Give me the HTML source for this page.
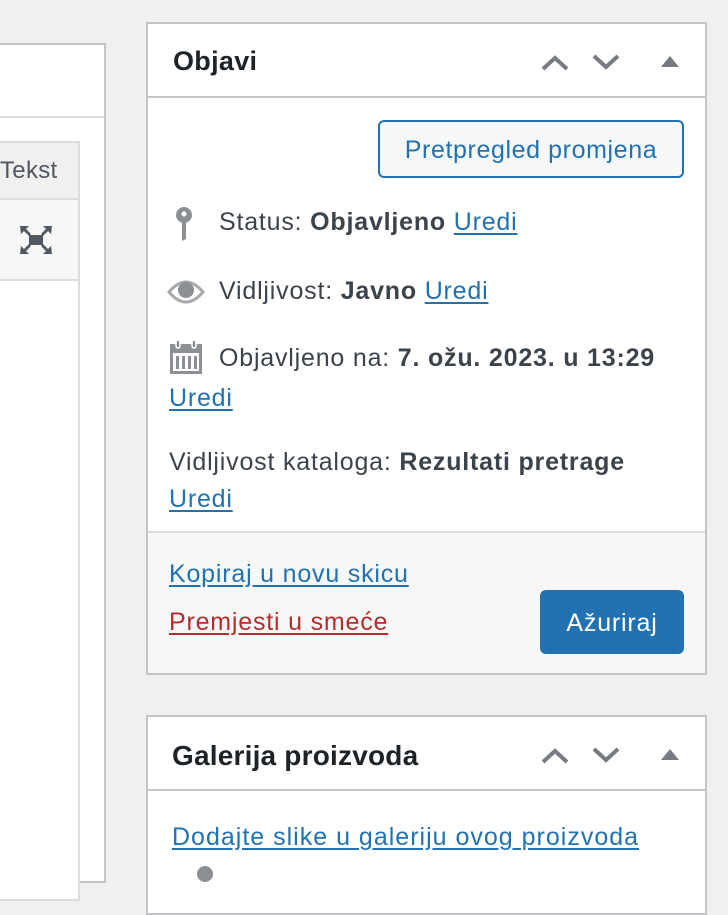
<!DOCTYPE html>
<html><head><meta charset="utf-8"><style>
*{box-sizing:border-box;margin:0;padding:0}
body{width:728px;height:870px;overflow:hidden;background:#f0f0f1;font-family:"Liberation Sans",Arial,sans-serif;color:#3c434a;position:relative;font-size:25px;letter-spacing:0.8px;line-height:1.15}
.abs{position:absolute}
a{color:#2271b1;text-decoration:underline;text-underline-offset:3px}
b{color:#3c434a}
</style></head><body>
<div class="abs" style="left:-4px;top:43px;width:110px;height:840px;background:#fff;border:2px solid #c3c4c7"></div>
<div class="abs" style="left:0;top:116px;width:104px;height:2px;background:#dcdcde"></div>
<div class="abs" style="left:-4px;top:141px;width:84px;height:760px;background:#fff;border:2px solid #dcdcde"></div>
<div class="abs" style="left:-2px;top:143px;width:80px;height:55px;background:#f0f0f1"></div>
<div class="abs" style="top:157px;left:0px;color:#50575e;letter-spacing:0.3px;font-size:24px">Tekst</div>
<div class="abs" style="left:-2px;top:198px;width:80px;height:83px;background:#f6f7f7;border-top:2px solid #dcdcde;border-bottom:2px solid #dcdcde"></div>
<svg class="abs" style="left:19px;top:225px" width="34" height="30" viewBox="0 0 34 30" fill="#50575e">
<rect x="10" y="10" width="14" height="10"/>
<path d="M1 1h9l-3 3 5 5-2 2-5-5-3 3z"/><path d="M33 1h-9l3 3-5 5 2 2 5-5 3 3z"/>
<path d="M1 29h9l-3-3 5-5-2-2-5 5-3-3z"/><path d="M33 29h-9l3-3-5-5 2-2 5 5 3-3z"/>
</svg>

<div class="abs" style="left:146px;top:22px;width:561px;height:653px;background:#fff;border:2px solid #c3c4c7"></div>
<div class="abs" style="left:148px;top:96px;width:557px;height:2px;background:#c3c4c7"></div>
<div class="abs" style="left:173px;top:46px;font-size:27px;font-weight:bold;color:#1d2327;letter-spacing:0.3px">Objavi</div>
<svg class="abs" style="left:540px;top:54px" width="30" height="18"><path d="M3 15l12-11 12 11" fill="none" stroke="#787c82" stroke-width="4"/></svg>
<svg class="abs" style="left:591px;top:53px" width="30" height="18"><path d="M3 3l12 11 12-11" fill="none" stroke="#787c82" stroke-width="4"/></svg>
<svg class="abs" style="left:660px;top:54px" width="20" height="14"><path d="M1 13L10 2l9 11z" fill="#787c82"/></svg>

<div class="abs" style="left:378px;top:120px;width:306px;height:58px;border:2px solid #2271b1;border-radius:6px;background:#f6f7f7;color:#2271b1;text-align:center;line-height:56px;letter-spacing:0.6px">Pretpregled promjena</div>

<svg class="abs" style="left:175px;top:207px" width="18" height="34" fill="#8c8f94"><circle cx="9" cy="8" r="8"/><circle cx="9" cy="7" r="2.5" fill="#fff"/><path d="M7 12h4v20l-4 2z"/></svg>
<div class="abs" style="left:219px;top:208px">Status: <b>Objavljeno</b> <a>Uredi</a></div>

<svg class="abs" style="left:167px;top:278px" width="38" height="28"><path d="M2 14Q19 -6 36 14Q19 34 2 14z" fill="none" stroke="#a7aaad" stroke-width="3"/><circle cx="19" cy="12" r="8" fill="#8c8f94"/></svg>
<div class="abs" style="left:219px;top:277px">Vidljivost: <b>Javno</b> <a>Uredi</a></div>

<svg class="abs" style="left:169px;top:340px" width="34" height="34" fill="#8c8f94"><rect x="1" y="4" width="32" height="30"/><rect x="4" y="13" width="26" height="18" fill="#fff"/><rect x="7" y="16" width="3" height="13"/><rect x="13" y="16" width="3" height="13"/><rect x="19" y="16" width="3" height="13"/><rect x="25" y="16" width="3" height="13"/><rect x="7" y="0" width="4" height="8" rx="2" stroke="#fff" stroke-width="1.5"/><rect x="23" y="0" width="4" height="8" rx="2" stroke="#fff" stroke-width="1.5"/></svg>
<div class="abs" style="left:219px;top:344px">Objavljeno na: <b>7. ožu. 2023. u 13:29</b></div>
<div class="abs" style="left:169px;top:384px"><a>Uredi</a></div>
<div class="abs" style="left:169px;top:448px">Vidljivost kataloga: <b>Rezultati pretrage</b></div>
<div class="abs" style="left:169px;top:485px"><a>Uredi</a></div>

<div class="abs" style="left:148px;top:531px;width:557px;height:142px;background:#f6f7f7;border-top:2px solid #dcdcde"></div>
<div class="abs" style="left:169px;top:560px"><a>Kopiraj u novu skicu</a></div>
<div class="abs" style="left:169px;top:608px"><a style="color:#b32d2e">Premjesti u smeće</a></div>
<div class="abs" style="left:540px;top:590px;width:144px;height:64px;background:#2271b1;border-radius:6px;color:#fff;text-align:center;line-height:66px">Ažuriraj</div>

<div class="abs" style="left:146px;top:715px;width:561px;height:200px;background:#fff;border:2px solid #c3c4c7"></div>
<div class="abs" style="left:148px;top:789px;width:557px;height:2px;background:#c3c4c7"></div>
<div class="abs" style="left:172px;top:740px;font-size:28px;font-weight:bold;color:#1d2327;letter-spacing:0.2px">Galerija proizvoda</div>
<svg class="abs" style="left:540px;top:747px" width="30" height="18"><path d="M3 15l12-11 12 11" fill="none" stroke="#787c82" stroke-width="4"/></svg>
<svg class="abs" style="left:591px;top:746px" width="30" height="18"><path d="M3 3l12 11 12-11" fill="none" stroke="#787c82" stroke-width="4"/></svg>
<svg class="abs" style="left:660px;top:747px" width="20" height="14"><path d="M1 13L10 2l9 11z" fill="#787c82"/></svg>
<div class="abs" style="left:172px;top:823px;letter-spacing:1px"><a>Dodajte slike u galeriju ovog proizvoda</a></div>
<div class="abs" style="left:197px;top:866px;width:16px;height:16px;border-radius:50%;background:#8c8f94"></div>
</body></html>
